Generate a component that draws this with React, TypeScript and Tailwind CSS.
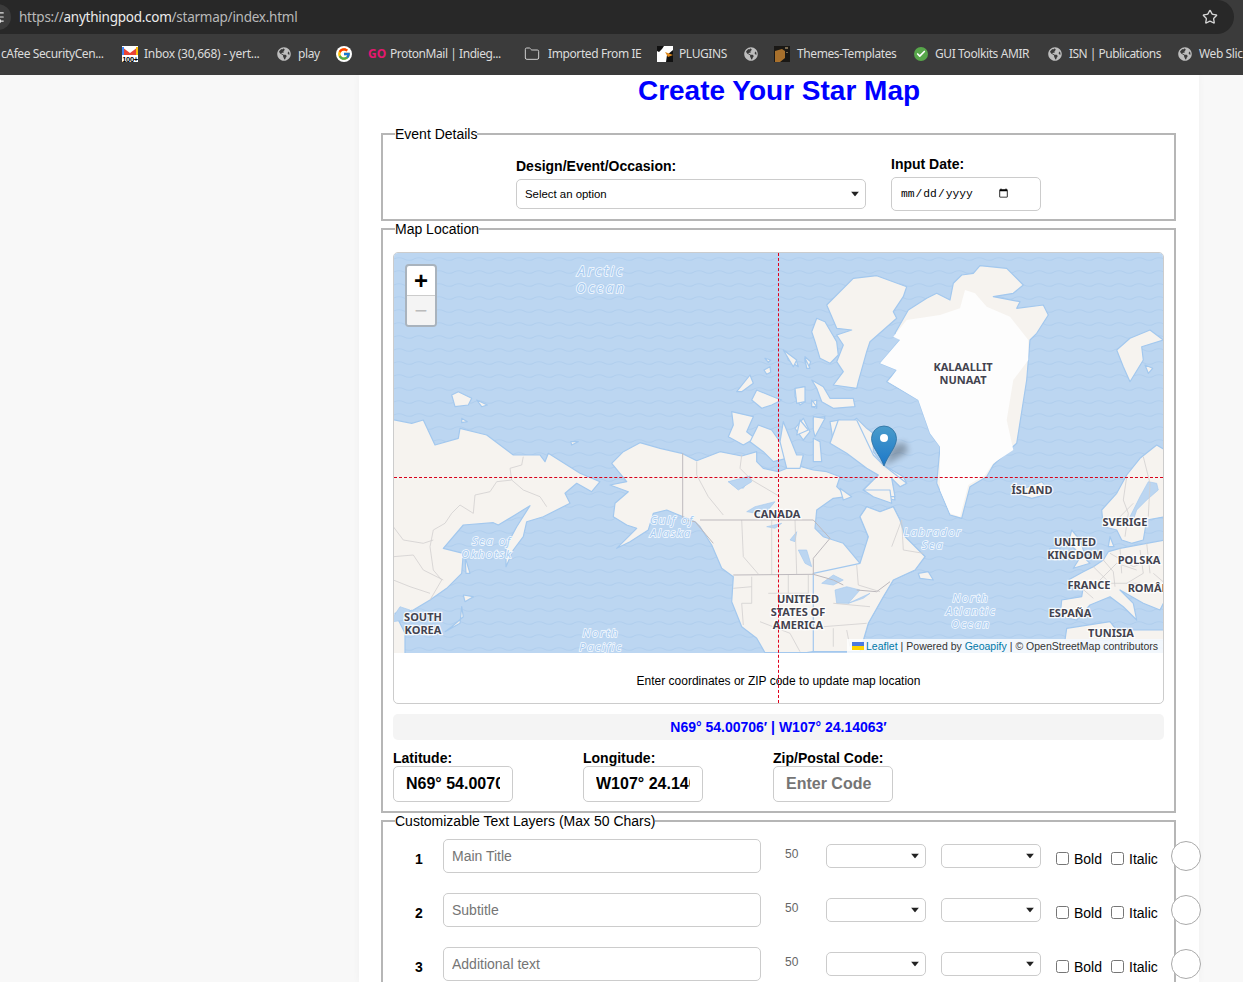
import React from 'react';
import { Folder, Star, SlidersHorizontal, Check } from 'lucide-react';
import { FaGlobeAmericas } from 'react-icons/fa';
import { FcGoogle } from 'react-icons/fc';

// polygons below are traced from crops, so each one carries its crop origin
const pts = (ox: number, oy: number, s: string) =>
  s
    .trim()
    .split(/\s+/)
    .map((p) => {
      const [x, y] = p.split(',').map(Number);
      return `${(ox + x / 3).toFixed(1)},${(oy + y / 3).toFixed(1)}`;
    })
    .join(' ');

const A = (s: string) => pts(380, 340, s);
const B = (s: string) => pts(780, 340, s);
const C = (s: string) => pts(700, 255, s);
const D = (s: string) => pts(1000, 440, s);
const E = (s: string) => pts(700, 470, s);
const F = (s: string) => pts(780, 120, s);

const LAND = [
  // North America
  A('695,370 730,335 780,308 840,325 905,340 950,362 1020,335 1085,348 1130,335') +
    ' ' +
    C('170,620 190,640 235,650 285,630 340,645 380,650 420,665') +
    ' ' +
    B('170,440 200,470 160,475 110,510 105,565 130,590 190,610 215,640 240,670 255,640 265,590 240,530 260,500 300,515 340,500 360,540 375,590 435,650 405,690 340,720 310,770 265,850 240,935') +
    ' ' +
    E('445,520 400,535 320,548 195,548 170,505 125,470 95,395 100,320 65,295 35,225 0,170') +
    ' ' +
    A('945,545 920,535 860,510 820,520 805,570 750,605 710,625 770,565 740,555 700,530 705,490 745,455 690,435 740,425'),
  // Quebec and Labrador
  B('240,670 265,590 240,530 260,500 300,515 340,500 360,540 375,590 435,650 405,690 340,720 310,770 265,850 240,935 100,935 100,700'),
  // Asia
  A('30,237 95,250 130,240 165,315 235,295 240,265 320,285 400,345 480,345 495,365 505,340 600,400 660,425 635,455 590,430 555,460 570,490 490,530 440,545 430,590 400,630 378,680 378,620 410,560 450,497 405,525 355,555 340,548 250,555 190,625 250,640 245,700 200,745 150,780 100,810 45,820 75,880 75,945 30,945'),
  A('245,800 250,830 215,860 195,875 240,850'),
  A('250,765 280,770 255,785'),
  A('255,650 270,700 258,700'),
  A('215,165 235,155 275,175 265,195 225,200'),
  A('290,180 322,195 305,200'),
  A('245,235 262,245 245,248'),
  A('572,305 595,305 575,315'),
  // Arctic Canada
  C('380,150 430,100 460,70 530,62 620,95 610,125 580,170 590,190 510,260 500,290 475,380 470,400 400,390 430,350 410,320 430,270 410,240 455,225 410,220'),
  C('350,190 375,200 410,260 415,300 390,325 360,310 345,260 335,230'),
  C('110,410 150,360 160,385 125,410'),
  C('155,435 170,405 230,430 245,435 215,450 185,460'),
  C('195,310 212,315 205,322'),
  C('192,345 210,335 212,352 200,358'),
  C('258,290 290,320 295,335 265,315'),
  C('315,305 332,320 325,340 315,320'),
  C('335,375 370,395 390,430 460,430 465,455 400,460 365,440 350,400'),
  C('285,405 310,395 315,440 300,450 285,425'),
  C('335,440 350,435 350,460 335,455'),
  C('95,470 160,485 140,530 165,550 130,570 85,545 100,510'),
  C('175,510 215,525 250,575 260,610 220,620 190,590 150,560'),
  C('285,520 310,490 330,530 310,555'),
  C('340,490 375,485 345,540'),
  C('340,550 360,560 365,620 340,620'),
  // Baffin
  C('390,500 420,495 430,520 470,490 500,520 520,535 520,590 550,630 610,665') +
    ' ' +
    B('380,430 360,440 335,415 345,480 300,470 250,450 295,405 255,380') +
    ' ' +
    C('450,590 400,560'),
  B('150,310 175,240 230,240 280,345 310,375 380,430 360,440 335,415 345,470 300,470 250,450 295,405 260,385 200,340'),
  B('250,450 330,450 335,490 280,470'),
  B('180,445 215,470 190,480'),
  B('45,145 75,140 75,185 50,190'),
  B('95,180 110,200 95,200'),
  B('100,230 135,235 105,290 100,270'),
  B('60,240 85,270 50,285'),
  B('10,30 50,60 40,80'),
  B('75,55 90,85 80,85'),
  C('250,500 290,600 310,600 300,640 260,640 240,560'),
  // Newfoundland
  B('415,700 445,695 460,720 420,715'),
  // Iceland
  D('60,150 125,125 155,160 95,175 60,165'),
  // Scandinavia
  D('305,210 350,160 380,105 420,55 470,15 495,30 495,230 440,240 430,300 395,310 365,300 350,270 310,260'),
  // Svalbard
  B('1050,-5 1110,-30 1150,0 1085,20 1090,60 1050,125 1030,80 1010,30'),
  B('1095,75 1118,85 1105,100'),
  // Mainland Europe
  D('495,300 440,310 360,325 325,335 310,360 280,380 250,395 205,420 250,440 245,470 185,480 180,530 230,540 270,495 330,470 370,500 410,540 400,490 360,450 430,490 480,510 495,480'),
  D('330,290 342,320 325,320'),
  D('215,270 240,300 260,360 270,370 220,385 245,345 205,310'),
  D('150,325 180,325 175,355 145,355'),
  // North Africa
  D('195,600 200,565 330,545 350,570 495,570 495,600'),
];

const WATER = [
  E('85,35 150,25 130,55 105,50'),
  E('140,125 165,110 225,95 200,125 170,130'),
  E('200,170 245,160 225,175'),
  E('270,210 290,185 285,215'),
  E('295,240 320,240 335,290 315,280'),
  E('365,340 400,315 430,330 400,345'),
  E('405,360 440,350 480,360 445,400 410,400'),
  E('445,400 510,370 490,385'),
  A('1045,425 1110,408 1115,425 1075,450'),
  A('40,830 60,800 90,810 75,840 40,845'),
  D('445,125 470,130 475,150 440,180 410,210 400,240 390,230 420,170'),
];

const BORDERS = [
  A('430,350 425,375 390,385 395,420 430,450 480,470 500,500'),
  A('395,420 350,425 330,455 285,465 280,520 240,495 215,520 195,550 160,570 150,620 160,690 185,720 150,780'),
  A('40,650 100,645 130,690 190,720'),
  A('40,560 70,600 130,610 160,600'),
  A('40,720 90,740 150,760'),
  A('950,365 950,405 985,470 1030,525'),
  A('1085,345 1080,385 1115,420 1200,470'),
  E('155,320 155,350 100,355'),
  E('155,350 155,400 125,400 130,465'),
  E('205,370 325,370'),
  E('265,315 265,370'),
  E('325,315 325,370'),
  E('180,455 270,490 300,545'),
  E('370,470 500,460'),
  E('400,475 400,530'),
  E('440,480 450,530'),
  E('400,400 510,410'),
  E('125,150 130,260 175,312'),
  E('215,150 215,312'),
  E('285,150 290,312'),
  E('470,285 475,345 540,365'),
  E('575,230 605,150 610,240 670,250'),
  D('380,110 370,180 385,220 375,290'),
  D('430,50 450,130 445,230'),
  D('310,360 340,395 345,440'),
  D('280,380 330,430'),
  D('360,325 365,400'),
  D('420,330 430,400 380,430'),
  D('440,310 450,400'),
  D('330,430 420,430'),
  D('460,400 495,430'),
  D('240,440 280,475'),
  D('330,340 400,380 480,350'),
  D('300,420 350,370 410,390'),
  D('350,240 400,190'),
];

const MAIN_BORDERS = [
  A('908,340 908,540 945,545 1000,610'),
  E('0,150 340,150 390,205 340,265 340,313'),
  E('100,315 340,313 400,330 430,345'),
  E('470,360 530,365 570,335'),
];

const COUNTRY_LABELS: [string, number, number][] = [
  ['KALAALLIT', 963, 371],
  ['NUNAAT', 963, 384],
  ['ÍSLAND', 1032, 494],
  ['CANADA', 777, 518],
  ['SVERIGE', 1125, 526],
  ['UNITED', 1075, 546],
  ['KINGDOM', 1075, 559],
  ['POLSKA', 1139, 564],
  ['FRANCE', 1089, 589],
  ['ROMÂNIA', 1155, 592],
  ['ESPAÑA', 1070, 617],
  ['TUNISIA', 1111, 637],
  ['UNITED', 798, 603],
  ['STATES OF', 798, 616],
  ['AMERICA', 798, 629],
  ['SOUTH', 423, 621],
  ['KOREA', 423, 634],
];

const OCEAN_LABELS: [string, number, number, number][] = [
  ['Arctic', 601, 276, 14],
  ['Ocean', 601, 293, 14],
  ['Sea of', 492, 545, 11],
  ['Okhotsk', 487, 558, 11],
  ['Gulf of', 672, 524, 11],
  ['Alaska', 671, 537, 11],
  ['Labrador', 933, 536, 11],
  ['Sea', 933, 549, 11],
  ['North', 971, 602, 11],
  ['Atlantic', 971, 615, 11],
  ['Ocean', 971, 628, 11],
  ['North', 601, 637, 11],
  ['Pacific', 601, 651, 11],
];

function WorldMap() {
  return (
    <svg viewBox="394 253 769 400" className="block h-[400px] w-[769px]">
      <defs>
        <pattern id="waves" x="394" y="253" width="20" height="13" patternUnits="userSpaceOnUse">
          <path d="M0 6 Q5 3.5 10 6 T20 6" fill="none" stroke="#b1cfee" strokeWidth="1.2" />
        </pattern>
        <linearGradient id="pin" x1="0" y1="0" x2="0" y2="1">
          <stop offset="0" stopColor="#4a9ccb" />
          <stop offset="1" stopColor="#1d78c9" />
        </linearGradient>
        <filter id="soft" x="-40%" y="-40%" width="180%" height="180%">
          <feGaussianBlur stdDeviation="3" />
        </filter>
      </defs>
      <rect x="394" y="253" width="769" height="400" fill="#bcd6f1" />
      <rect x="394" y="253" width="769" height="400" fill="url(#waves)" />

      {LAND.map((p, i) => (
        <polygon key={i} points={p} fill="#f6f3ef" stroke="#a3c8ee" strokeWidth="1.2" strokeLinejoin="round" />
      ))}

      {/* Greenland: tan rim with the white ice sheet on it */}
      <polygon
        points={`${F('520,490 545,465 580,460 600,437 680,445 730,495 700,520 640,530 720,545 710,565 790,555 805,585 770,640')} ${B('750,0 740,120 710,310 640,375 620,410 570,440 545,535 510,525 470,430 480,320 450,280 415,180 320,125 350,90 300,70 360,0')} ${F('345,640 385,570 440,535 470,520 510,540')}`}
        fill="#f6f3ef"
        stroke="#a3c8ee"
        strokeWidth="1.2"
        strokeLinejoin="round"
      />
      <polygon
        points={`${F('340,650 380,600 480,585 540,565 555,510 585,520 620,560 690,590 745,660')} ${B('745,60 700,120 680,240 700,330 640,370 615,405 565,435 540,530 510,520 480,450 480,320 450,280 415,180 325,125 350,90 300,70 360,0')}`}
        fill="#fdfdfd"
      />

      {WATER.map((p, i) => (
        <polygon key={i} points={p} fill="#bcd6f1" stroke="#a3c8ee" strokeWidth="0.6" />
      ))}
      {BORDERS.map((p, i) => (
        <polyline key={i} points={p} fill="none" stroke="#d2cfcf" strokeWidth="0.8" />
      ))}
      {MAIN_BORDERS.map((p, i) => (
        <polyline key={i} points={p} fill="none" stroke="#bdb9bd" strokeWidth="1" />
      ))}

      {COUNTRY_LABELS.map(([t, x, y], i) => (
        <text
          key={i}
          x={x}
          y={y}
          textAnchor="middle"
          fontFamily="'Noto Sans', sans-serif"
          fontWeight="700"
          fontSize="11"
          fill="#43434f"
          stroke="#ffffff"
          strokeOpacity="0.85"
          strokeWidth="2.5"
          paintOrder="stroke"
        >
          {t}
        </text>
      ))}
      {OCEAN_LABELS.map(([t, x, y, size], i) => (
        <text
          key={i}
          x={x}
          y={y}
          textAnchor="middle"
          fontFamily="'Noto Sans', sans-serif"
          fontStyle="italic"
          fontSize={size}
          letterSpacing={size > 11 ? 2.2 : 1.7}
          fill="#a8ccf2"
          stroke="#f4f9fe"
          strokeWidth="1.6"
          paintOrder="stroke"
        >
          {t}
        </text>
      ))}

      {/* marker */}
      <polygon points="884,466 892,446 905,442 908,452" fill="#000" opacity="0.28" filter="url(#soft)" />
      <path
        d="M884 466 C880 455 871.5 447 871.5 438.5 A12.5 12.5 0 0 1 896.5 438.5 C896.5 447 888 455 884 466Z"
        fill="url(#pin)"
        stroke="#2b6f9e"
        strokeWidth="0.8"
      />
      <circle cx="884" cy="438" r="4" fill="#fff" />
    </svg>
  );
}

function Globe() {
  return <FaGlobeAmericas className="h-[14px] w-[14px] shrink-0 text-[#bdbdbd]" />;
}

function GmailIcon() {
  return (
    <svg viewBox="0 0 16 16" className="h-4 w-4 shrink-0">
      <rect width="16" height="16" fill="#fff" />
      <path d="M0 1 L8 7 L16 1 V9 H0Z" fill="#ea4335" />
      <path d="M0 1 H2 V9 H0Z" fill="#4285f4" />
      <path d="M14 1 H16 V9 H14Z" fill="#fbbc05" />
      <rect y="9" width="16" height="7" fill="#fff" />
      <text x="8" y="15.5" textAnchor="middle" fontSize="7.5" fontWeight="700" fontFamily="'Liberation Sans', sans-serif" fill="#000">
        100+
      </text>
    </svg>
  );
}

function BirdIcon() {
  return (
    <svg viewBox="0 0 16 16" className="h-4 w-4 shrink-0">
      <rect width="16" height="16" fill="#fff" />
      <path d="M0 0 H7 L5 3 L2 6 L0 5Z M10 9 L16 4 V16 H9Z" fill="#111" />
      <path d="M8 6 L16 9 L11 11Z" fill="#e08a1e" />
    </svg>
  );
}

function ThumbIcon() {
  return (
    <svg viewBox="0 0 16 16" className="h-4 w-4 shrink-0">
      <rect width="16" height="16" fill="#1a1815" />
      <path d="M1 5 L8 3 L11 5 V12 L6 16 H1Z" fill="#a8702c" />
      <path d="M11 1 H14 V3 H11Z M12 6 H14 V7 H12Z" fill="#7a6a50" />
    </svg>
  );
}

function CheckIcon() {
  return (
    <span className="flex h-[14px] w-[14px] shrink-0 items-center justify-center rounded-full bg-[#57a64a]">
      <Check className="h-[10px] w-[10px] text-white" strokeWidth={4} />
    </span>
  );
}

function BookmarkLabel({ className, children }: { className: string; children: React.ReactNode }) {
  return <span className={`block shrink-0 whitespace-nowrap ${className}`}>{children}</span>;
}

function BrowserChrome() {
  return (
    <div className="h-[75px] bg-[#3b3b3b] font-['Noto_Sans',sans-serif] text-[#dcdcdc]">
      <div className="flex h-[34px] w-[1234px] items-center rounded-r-[17px] bg-[#282828]">
        <span className="flex h-[26px] w-[26px] shrink-0 -translate-x-[15px] items-center justify-center rounded-full bg-[#3b3b3b]">
          <SlidersHorizontal className="h-[14px] w-[14px] text-[#e3e3e3]" />
        </span>
        <span className="-ml-[7px] whitespace-nowrap text-[13.5px] tracking-[-0.25px]">
          <span className="text-[#b9b9b9]">https://</span>
          <span className="text-[#ececec]">anythingpod.com</span>
          <span className="text-[#b9b9b9]">/starmap/index.html</span>
        </span>
        <Star className="ml-auto mr-[16px] h-[16px] w-[16px] text-[#d6d6d6]" />
      </div>
      <div className="flex h-[40px] items-center gap-[6px] overflow-hidden whitespace-nowrap pl-[1px] text-[12px] tracking-[-0.4px]">
        <BookmarkLabel className="w-[104px]">cAfee SecurityCen...</BookmarkLabel>
        <span className="ml-[11px]"><GmailIcon /></span>
        <BookmarkLabel className="w-[116px] tracking-[-0.27px]">Inbox (30,668) - yert...</BookmarkLabel>
        <span className="ml-[11px]"><Globe /></span>
        <BookmarkLabel className="ml-[1px] w-[22px]">play</BookmarkLabel>
        <span className="ml-[10px] flex h-4 w-4 items-center justify-center rounded-full bg-white">
          <FcGoogle className="h-[14px] w-[14px]" />
        </span>
        <span className="ml-[10px] w-[16px] text-[12px] font-bold leading-none tracking-normal text-[#e6176f]">GO</span>
        <BookmarkLabel className="w-[111px] tracking-[-0.45px]">ProtonMail | Indieg...</BookmarkLabel>
        <Folder className="ml-[17px] h-4 w-4 shrink-0 text-[#cfcfcf]" strokeWidth={1.5} />
        <BookmarkLabel className="ml-[2px] w-[93px]">Imported From IE</BookmarkLabel>
        <span className="ml-[10px]"><BirdIcon /></span>
        <BookmarkLabel className="w-[48px]">PLUGINS</BookmarkLabel>
        <span className="ml-[11px]"><Globe /></span>
        <span className="ml-[10px]"><ThumbIcon /></span>
        <BookmarkLabel className="ml-[1px] w-[100px]">Themes-Templates</BookmarkLabel>
        <span className="ml-[11px]"><CheckIcon /></span>
        <BookmarkLabel className="ml-[1px] w-[95px]">GUI Toolkits AMIR</BookmarkLabel>
        <span className="ml-[12px]"><Globe /></span>
        <BookmarkLabel className="ml-[1px] w-[92px] tracking-[-0.52px]">ISN | Publications</BookmarkLabel>
        <span className="ml-[11px]"><Globe /></span>
        <BookmarkLabel className="ml-[1px] w-[44px]">Web Slic</BookmarkLabel>
      </div>
    </div>
  );
}

function ZoomControl() {
  return (
    <div className="absolute left-[11px] top-[11px] w-[32px] rounded-[4px] border-2 border-[#a9b3bd] bg-white font-['Liberation_Sans',sans-serif]">
      <div className="flex h-[30px] items-center justify-center border-b border-[#ccc] text-[24px] font-bold leading-none text-black">+</div>
      <div className="flex h-[29px] items-center justify-center rounded-b-[2px] bg-[#f4f4f4] text-[22px] leading-none text-[#bbb]">−</div>
    </div>
  );
}

function Attribution() {
  return (
    <div className="absolute bottom-0 right-0 flex h-[14px] items-center whitespace-nowrap bg-white/80 pl-[5px] pr-[5px] text-[10.5px] leading-none text-[#333]">
      <span className="mr-[1px] flex h-[8px] w-[12px] flex-col">
        <span className="h-[4px] bg-[#4c7be1]" />
        <span className="h-[4px] bg-[#ffd500]" />
      </span>
      <span className="ml-[1px] text-[#0078a8]">Leaflet</span>
      <span className="mx-[3px]">|</span>
      Powered by&nbsp;<span className="text-[#0078a8]">Geoapify</span>
      <span className="mx-[3px]">|</span>© OpenStreetMap contributors
    </div>
  );
}

function MapCard() {
  return (
    <div className="relative mt-[15px] h-[452px] rounded-[5px] border border-[#ccc]">
      <div className="relative h-[400px] overflow-hidden rounded-t-[4px]">
        <WorldMap />
        <ZoomControl />
        <Attribution />
      </div>
      <p className="pt-[20px] text-center text-[12px] leading-[16px] text-black">Enter coordinates or ZIP code to update map location</p>
      {/* crosshair */}
      <div className="absolute bottom-0 left-[384px] top-0 border-l border-dashed border-[#e0001a]" />
      <div className="absolute left-0 right-0 top-[224px] border-t border-dashed border-[#d8001a]" />
    </div>
  );
}

function CoordField({ label, value, placeholder }: { label: string; value?: string; placeholder?: string }) {
  return (
    <label className="block w-[120px]">
      <span className="block whitespace-nowrap text-[14px] font-bold leading-[16px] text-black">{label}</span>
      <input
        readOnly
        value={value}
        placeholder={placeholder}
        className="h-[36px] w-[120px] rounded-[5px] border border-[#ccc] bg-white px-[12px] text-[16px] font-bold text-black outline-none placeholder:text-[#757575]"
      />
    </label>
  );
}

// native arrow differs per platform, so the select gets its own small triangle
function DropArrow() {
  return (
    <svg viewBox="0 0 8 5" className="pointer-events-none absolute right-[7px] top-1/2 h-[5px] w-[8px] -translate-y-1/2">
      <path d="M0 0 H8 L4 5Z" fill="#222" />
    </svg>
  );
}

function LayerSelect({ className }: { className: string }) {
  return (
    <div className={`relative mt-[5px] h-[24px] w-[100px] shrink-0 ${className}`}>
      <select className="h-[24px] w-[100px] appearance-none rounded-[5px] border border-[#ccc] bg-white" />
      <DropArrow />
    </div>
  );
}

function TextLayerRow({ n, placeholder }: { n: number; placeholder: string }) {
  return (
    <div className="flex h-[34px] items-start">
      <span className="ml-[22px] mt-[12px] w-[28px] shrink-0 text-[14px] font-bold leading-[16px] text-black">{n}</span>
      <input
        placeholder={placeholder}
        className="h-[34px] w-[318px] shrink-0 rounded-[5px] border border-[#ccc] bg-white px-[8px] text-[14px] outline-none placeholder:text-[#757575]"
      />
      <span className="ml-[24px] mt-[7px] w-[41px] shrink-0 text-[12px] leading-[16px] text-[#666]">50</span>
      <LayerSelect className="" />
      <LayerSelect className="ml-[15px]" />
      <input type="checkbox" className="ml-[15px] mt-[13px] h-[13px] w-[13px] shrink-0" />
      <span className="ml-[5px] mt-[12px] w-[37px] shrink-0 text-[14px] leading-[16px] text-black">Bold</span>
      <input type="checkbox" className="mt-[13px] h-[13px] w-[13px] shrink-0" />
      <span className="ml-[5px] mt-[12px] w-[42px] shrink-0 text-[14px] leading-[16px] text-black">Italic</span>
      <div className="mt-[2px] h-[30px] w-[30px] shrink-0 rounded-full border border-[#aaa] bg-white" />
    </div>
  );
}

function Section({ title, className, children }: { title: string; className: string; children: React.ReactNode }) {
  return (
    <fieldset className={`w-[795px] min-w-0 border-2 border-[#b6b6b6] px-[10px] ${className}`}>
      <legend className="ml-[2px] text-[14px] leading-[16px] text-black">{title}</legend>
      {children}
    </fieldset>
  );
}

export default function App() {
  return (
    <div className="h-[982px] w-[1243px] overflow-hidden bg-[#f8f8f8] font-['Liberation_Sans',Arial,sans-serif]">
      <BrowserChrome />
      <main className="ml-[359px] h-[907px] w-[840px] bg-white px-[22px] shadow-[0_0_8px_rgba(0,0,0,0.04)]">
        <h1 className="h-[51px] text-center text-[28px] font-bold leading-[32px] text-[#0000ff]">Create Your Star Map</h1>

        <Section title="Event Details" className="h-[95px]">
          <div className="ml-[123px] mt-[14px] flex items-center gap-[25px]">
            <div className="w-[350px]">
              <label className="block text-[14px] font-bold leading-[16px] text-black">Design/Event/Occasion:</label>
              <div className="relative mt-[5px] h-[30px] w-[350px]">
                <select className="h-[30px] w-[350px] appearance-none rounded-[5px] border border-[#ccc] bg-white pl-[8px] pt-[1px] text-[11.4px] text-black">
                  <option>Select an option</option>
                </select>
                <DropArrow />
              </div>
            </div>
            <div className="w-[150px]">
              <label className="block text-[14px] font-bold leading-[16px] text-black">Input Date:</label>
              <input
                type="date"
                className="mt-[5px] h-[34px] w-[150px] rounded-[5px] border border-[#ccc] bg-white pl-[8px] pr-[29px] font-['Liberation_Mono',monospace] text-[11.3px] text-black outline-none"
              />
            </div>
          </div>
        </Section>

        <Section title="Map Location" className="h-[592px]">
          <MapCard />
          <div className="mt-[10px] flex h-[26px] items-center justify-center rounded-[5px] bg-[#f4f4f4] text-[14px] font-bold text-[#0000ff]">
            N69° 54.00706′ | W107° 24.14063′
          </div>
          <div className="mt-[10px] flex gap-[70px]">
            <CoordField label="Latitude:" value="N69° 54.00706′" />
            <CoordField label="Longitude:" value="W107° 24.14063′" />
            <CoordField label="Zip/Postal Code:" placeholder="Enter Code" />
          </div>
        </Section>

        <Section title="Customizable Text Layers (Max 50 Chars)" className="">
          <div className="mt-[10px] flex flex-col gap-[20px] pb-[20px]">
            <TextLayerRow n={1} placeholder="Main Title" />
            <TextLayerRow n={2} placeholder="Subtitle" />
            <TextLayerRow n={3} placeholder="Additional text" />
          </div>
        </Section>
      </main>
    </div>
  );
}
